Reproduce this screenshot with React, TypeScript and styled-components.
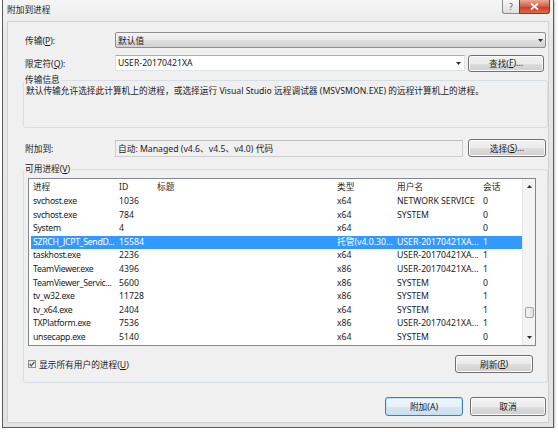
import React from 'react';
import styled, { createGlobalStyle } from 'styled-components';

const GlobalStyle = createGlobalStyle`
  html, body {
    margin: 0;
    padding: 0;
  }
  body {
    background: #ffffff;
    font-family: "Noto Sans", "Noto Sans CJK SC", sans-serif;
    font-size: 8.7px;
    color: #1b1b1b;
    overflow: hidden;
  }
`;

const Window = styled.div`
  box-sizing: border-box;
  width: 552px;
  height: 428px;
  margin-left: 2px;
  border: 1px solid #5b5b5b;
  border-top: none;
  background: linear-gradient(#f4f4f4, #e7e7e7 40px, #e3e3e3);
  padding: 0 4px 4px 4px;
  display: flex;
  flex-direction: column;
  box-shadow: 1px 1px 2px rgba(0, 0, 0, 0.25);
`;

const TitleBar = styled.div`
  height: 21px;
  display: flex;
  align-items: flex-start;
`;

const TitleText = styled.div`
  line-height: 21px;
  color: #222;
`;

const Caption = styled.div`
  margin-left: auto;
  margin-right: -1px;
  display: flex;
`;

const HelpButton = styled.div`
  box-sizing: border-box;
  width: 17px;
  height: 14px;
  border: 1px solid #8d8d8d;
  border-top: none;
  border-right: none;
  border-radius: 0 0 0 3px;
  background: linear-gradient(#f7f7f7, #dedede);
  display: flex;
  align-items: center;
  justify-content: center;
  font-size: 8px;
  color: #4a4a4a;
`;

const CloseButton = styled.div`
  box-sizing: border-box;
  width: 31px;
  height: 14px;
  border: 1px solid #8a3a2a;
  border-top: none;
  border-radius: 0 0 3px 0;
  background: linear-gradient(#eaa898, #d65c43 50%, #c93b20 51%, #d86a4f);
  display: flex;
  align-items: center;
  justify-content: center;
`;

const Client = styled.div`
  box-sizing: border-box;
  width: 542px;
  height: 402px;
  background: #f0f0f0;
  box-shadow: inset 0 0 0 1px #d0d0d0;
  padding-top: 11px;
  display: flex;
  flex-direction: column;
`;

const FieldRow = styled.div<{ $top?: number; $h: number }>`
  display: flex;
  align-items: center;
  height: ${p => p.$h}px;
  margin-top: ${p => p.$top ?? 0}px;
  padding-left: 18px;
`;

const Label = styled.div`
  width: 90px;
  flex-shrink: 0;
`;

const Key = styled.span`
  text-decoration: underline;
`;

const Combo = styled.div`
  box-sizing: border-box;
  width: 431px;
  height: 16px;
  border: 1px solid #8e8f8f;
  border-radius: 2px;
  background: linear-gradient(#f3f3f3, #ececec 50%, #dfdfdf 51%, #d3d3d3);
  display: flex;
  align-items: center;
  padding: 0 2px 0 2px;
`;

const TextBox = styled.div<{ $w: number; $readonly?: boolean }>`
  box-sizing: border-box;
  width: ${p => p.$w}px;
  height: ${p => (p.$readonly ? 17 : 16)}px;
  border: 1px solid ${p => (p.$readonly ? '#cfcfcf' : '#dfe2e8')};
  border-top-color: ${p => (p.$readonly ? '#bdbdbd' : '#abadb3')};
  background: ${p => (p.$readonly ? '#f0f0f0' : '#ffffff')};
  display: flex;
  align-items: center;
  padding: 0 3px 0 2px;
`;

const Grow = styled.span`
  flex: 1;
  white-space: nowrap;
  overflow: hidden;
`;

const Button = styled.div<{ $w: number; $h?: number; $primary?: boolean; $gap?: number }>`
  box-sizing: border-box;
  width: ${p => p.$w}px;
  height: ${p => p.$h ?? 18}px;
  margin-left: ${p => p.$gap ?? 0}px;
  flex-shrink: 0;
  border: 1px solid ${p => (p.$primary ? '#3c7fb1' : '#707070')};
  border-radius: 3px;
  background: ${p =>
    p.$primary
      ? 'linear-gradient(#f1f7fb, #e6f0f7 50%, #d6e6f1 51%, #cbdfec)'
      : 'linear-gradient(#f2f2f2, #ebebeb 50%, #dddddd 51%, #cfcfcf)'};
  box-shadow: inset 0 0 0 1px ${p => (p.$primary ? '#bfe2f5' : '#fbfbfb')};
  display: flex;
  align-items: center;
  justify-content: center;
  color: #1b1b1b;
`;

const Group = styled.fieldset<{ $h: number; $top: number }>`
  box-sizing: border-box;
  height: ${p => p.$h}px;
  margin: ${p => p.$top}px 1px 0 16px;
  padding: 0 0 0 2px;
  min-width: 0;
  border: 1px solid #d5dfe5;
  border-radius: 3px;
`;

const Legend = styled.legend`
  padding: 0 1px;
  margin-left: -2px;
  height: 12px;
  line-height: 12px;
`;

const Description = styled.div`
  margin-top: -1px;
  line-height: 12px;
  white-space: nowrap;
`;

const List = styled.div`
  box-sizing: border-box;
  width: 508px;
  height: 168px;
  margin: 3px 0 0 2px;
  border: 1px solid #828790;
  background: #ffffff;
  display: flex;
  overflow: hidden;
`;

const ListBody = styled.div`
  flex: 1;
  padding-left: 2px;
  overflow: hidden;
`;

const HeaderRow = styled.div`
  display: flex;
  height: 16px;
  line-height: 16px;
  color: #2a2a2a;
`;

const Row = styled.div<{ $selected?: boolean }>`
  display: flex;
  height: 13.6px;
  line-height: 13.6px;
  background: ${p => (p.$selected ? '#3399ff' : 'transparent')};
  color: ${p => (p.$selected ? '#ffffff' : '#1b1b1b')};
`;

const Cell = styled.div<{ $w: number; $first?: boolean }>`
  box-sizing: border-box;
  width: ${p => p.$w}px;
  flex-shrink: 0;
  padding-left: ${p => (p.$first ? 2 : 4)}px;
  letter-spacing: ${p => (p.$first ? '-0.3px' : 'normal')};
  white-space: nowrap;
  overflow: hidden;
`;

const ScrollBar = styled.div`
  width: 12px;
  flex-shrink: 0;
  background: #f4f4f4;
  border-left: 1px solid #e6e6e6;
  display: flex;
  flex-direction: column;
  align-items: center;
`;

const ArrowBox = styled.div`
  height: 15px;
  display: flex;
  align-items: center;
  justify-content: center;
`;

const Track = styled.div`
  flex: 1;
  display: flex;
  flex-direction: column;
  align-items: center;
`;

const Thumb = styled.div<{ $top: number }>`
  box-sizing: border-box;
  width: 9px;
  height: 11px;
  margin-top: ${p => p.$top}px;
  border: 1px solid #a3a3a3;
  border-radius: 2px;
  background: linear-gradient(90deg, #f3f3f3, #e2e2e2);
`;

const OptionRow = styled.div`
  width: 505px;
  height: 18px;
  margin: 9px 0 0 2px;
  display: flex;
  align-items: center;
  justify-content: space-between;
`;

const CheckLabel = styled.div`
  display: flex;
  align-items: center;
  gap: 3px;
`;

const CheckBox = styled.div`
  box-sizing: border-box;
  width: 8px;
  height: 8px;
  border: 1px solid #8e8f8f;
  background: linear-gradient(135deg, #dcdcdc, #ffffff);
  display: flex;
  align-items: center;
  justify-content: center;
`;

const Footer = styled.div`
  margin-top: 14px;
  padding-right: 3px;
  display: flex;
  justify-content: flex-end;
`;

const Arrow = ({ up }: { up?: boolean }) => (
  <svg width="5" height="3" viewBox="0 0 5 3">
    <path d={up ? 'M0 3 L2.5 0 L5 3 Z' : 'M0 0 L5 0 L2.5 3 Z'} fill="#2e2e2e" />
  </svg>
);

type Proc = [string, string, string, string, string];

const processes: Proc[] = [
  ['svchost.exe', '1036', 'x64', 'NETWORK SERVICE', '0'],
  ['svchost.exe', '784', 'x64', 'SYSTEM', '0'],
  ['System', '4', 'x64', '', '0'],
  ['SZRCH_JCPT_SendD...', '15584', '托管(v4.0.30...', 'USER-20170421XA...', '1'],
  ['taskhost.exe', '2236', 'x64', 'USER-20170421XA...', '1'],
  ['TeamViewer.exe', '4396', 'x86', 'USER-20170421XA...', '1'],
  ['TeamViewer_Servic...', '5600', 'x86', 'SYSTEM', '0'],
  ['tv_w32.exe', '11728', 'x86', 'SYSTEM', '1'],
  ['tv_x64.exe', '2404', 'x64', 'SYSTEM', '1'],
  ['TXPlatform.exe', '7536', 'x86', 'USER-20170421XA...', '1'],
  ['unsecapp.exe', '5140', 'x64', 'SYSTEM', '0'],
];

const widths = [84, 38, 180, 60, 86, 44];

export default function App() {
  return (
    <>
      <GlobalStyle />
      <Window>
        <TitleBar>
          <TitleText>附加到进程</TitleText>
          <Caption>
            <HelpButton>?</HelpButton>
            <CloseButton>
              <svg width="9" height="7" viewBox="0 0 9 7">
                <path d="M1 0.5 L8 6.5 M8 0.5 L1 6.5" stroke="#ffffff" strokeWidth="1.8" />
              </svg>
            </CloseButton>
          </Caption>
        </TitleBar>

        <Client>
          <FieldRow $h={16}>
            <Label>
              传输(<Key>P</Key>):
            </Label>
            <Combo>
              <Grow>默认值</Grow>
              <Arrow />
            </Combo>
          </FieldRow>

          <FieldRow $top={6} $h={18}>
            <Label>
              限定符(<Key>Q</Key>):
            </Label>
            <TextBox $w={350}>
              <Grow>USER-20170421XA</Grow>
              <Arrow />
            </TextBox>
            <Button $w={76} $h={17} $gap={3}>
              查找(<Key>F</Key>)...
            </Button>
          </FieldRow>

          <Group $h={54} $top={2}>
            <Legend>传输信息</Legend>
            <Description>
              默认传输允许选择此计算机上的进程，或选择运行 Visual Studio 远程调试器 (MSVSMON.EXE) 的远程计算机上的进程。
            </Description>
          </Group>

          <FieldRow $top={11} $h={18}>
            <Label>附加到:</Label>
            <TextBox $w={348} $readonly>
              <Grow>自动: Managed (v4.6、v4.5、v4.0) 代码</Grow>
            </TextBox>
            <Button $w={78} $gap={5}>
              选择(<Key>S</Key>)...
            </Button>
          </FieldRow>

          <Group $h={220} $top={6}>
            <Legend>
              可用进程(<Key>V</Key>)
            </Legend>
            <List>
              <ListBody>
                <HeaderRow>
                  {['进程', 'ID', '标题', '类型', '用户名', '会话'].map((h, i) => (
                    <Cell key={h} $w={widths[i]} $first={i === 0}>
                      {h}
                    </Cell>
                  ))}
                </HeaderRow>
                {processes.map((p, r) => {
                  const cells = [p[0], p[1], '', p[2], p[3], p[4]];
                  return (
                    <Row key={r} $selected={r === 3}>
                      {cells.map((c, i) => (
                        <Cell key={i} $w={widths[i]} $first={i === 0}>
                          {c}
                        </Cell>
                      ))}
                    </Row>
                  );
                })}
              </ListBody>
              <ScrollBar>
                <ArrowBox>
                  <Arrow up />
                </ArrowBox>
                <Track>
                  <Thumb $top={113} />
                </Track>
                <ArrowBox>
                  <Arrow />
                </ArrowBox>
              </ScrollBar>
            </List>
            <OptionRow>
              <CheckLabel>
                <CheckBox>
                  <svg width="6" height="6" viewBox="0 0 6 6">
                    <path d="M0.6 3 L2.3 4.8 L5.4 0.8" stroke="#3a4a6a" strokeWidth="1.2" fill="none" />
                  </svg>
                </CheckBox>
                <span>
                  显示所有用户的进程(<Key>U</Key>)
                </span>
              </CheckLabel>
              <Button $w={78}>
                刷新(<Key>R</Key>)
              </Button>
            </OptionRow>
          </Group>

          <Footer>
            <Button $w={78} $h={19} $primary>
              附加(A)
            </Button>
            <Button $w={76} $h={19} $gap={7}>
              取消
            </Button>
          </Footer>
        </Client>
      </Window>
    </>
  );
}
